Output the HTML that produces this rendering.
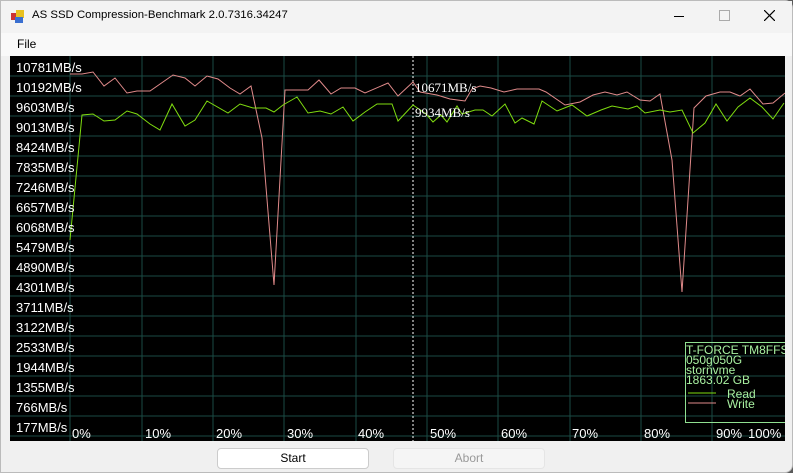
<!DOCTYPE html>
<html><head><style>
body{margin:0;width:793px;height:473px;background:#5a5a5a;font-family:"Liberation Sans",sans-serif;overflow:hidden;position:relative}
.win{position:absolute;left:0;top:0;width:791px;height:471px;background:#f0f0f0;border:1px solid #bbb;border-radius:0 8px 8px 0}
.title{position:absolute;left:0;top:0;width:791px;height:32px;background:#f3f3f3}
.menu{position:absolute;left:0;top:32px;width:791px;height:23px;background:#f9f9f9}
.btn{position:absolute;top:448px;width:150px;height:19px;border:1px solid #ccc;border-radius:4px;background:#fff;font-size:12px;text-align:center;line-height:19px}
</style></head><body>
<div class="win">
<div class="title">
<svg style="position:absolute;left:10px;top:9px" width="14" height="14"><rect x="0" y="3" width="7" height="7" fill="#c33"/><rect x="5" y="0" width="8" height="8" fill="#e8c020"/><rect x="4" y="7" width="8" height="6" fill="#3a6fd0"/></svg>
<div style="position:absolute;left:31px;top:8px;font-size:11.4px;color:#000">AS SSD Compression-Benchmark 2.0.7316.34247</div>
<div style="position:absolute;left:673px;top:15px;width:10px;height:1px;background:#000"></div>
<div style="position:absolute;left:718px;top:9px;width:9px;height:9px;border:1px solid #aaa"></div>
<svg style="position:absolute;left:763px;top:9px" width="11" height="11"><path d="M0 0L11 11M11 0L0 11" stroke="#000" stroke-width="1.2"/></svg>
</div>
<div class="menu"><span style="position:absolute;left:16px;top:4px;font-size:12px">File</span></div>
</div>
<svg style="position:absolute;left:10px;top:56px" width="775" height="385" viewBox="10 56 775 385">
<rect x="10" y="56" width="775" height="385" fill="#000"/>
<g stroke="#1a4a44" stroke-width="1">
<path d="M70 56V441M142 56V441M213 56V441M284 56V441M356 56V441M427 56V441M498 56V441M570 56V441M641 56V441M712 56V441"/>
<path d="M10 76H785M10 96H785M10 116H785M10 136H785M10 156H785M10 176H785M10 196H785M10 216H785M10 236H785M10 256H785M10 276H785M10 296H785M10 316H785M10 336H785M10 356H785M10 376H785M10 396H785M10 416H785M10 436H785"/>
</g>
<path d="M413 56V441" stroke="#fff" stroke-dasharray="2,2"/>
<polyline fill="none" stroke="#e08a8a" stroke-width="1" points="70,74 82,74 93,72 104,86 115,78 127,93 137,91 150,91 173,75 185,78 195,86 207,76 218,79 230,88 240,94 251,86 262,138 274,285 285,90 300,90 308,90 319,80 331,94 341,88 355,88 365,93 388,83 398,96 413,82 420,92 437,95 450,99 465,101 472,89 480,86 491,88 504,92 517,89 539,89 546,92 565,105 580,102 593,95 605,92 617,95 627,92 640,100 650,101 660,94 672,160 682,292 694,108 706,96 720,92 730,92 740,96 750,89 763,104 773,103 785,93"/>
<polyline fill="none" stroke="#7fdc10" stroke-width="1" points="70,240 82,115 93,114 104,121 115,120 127,111 137,114 150,124 160,130 172,104 185,126 195,120 207,101 228,113 240,104 253,108 266,108 274,112 283,105 297,97 308,113 320,111 331,114 343,107 353,121 365,112 377,104 392,104 398,121 413,105 426,114 433,122 441,115 447,122 457,106 462,114 475,110 483,110 492,116 505,104 515,123 522,118 534,124 542,101 557,111 572,105 587,116 601,110 612,106 628,109 637,106 645,113 660,110 670,112 682,110 693,133 705,123 716,104 727,121 738,107 750,98 762,107 773,119 784,103"/>
<g fill="#fff" font-family="Liberation Sans" font-size="13">
<text x="16" y="72">10781MB/s</text><text x="16" y="92">10192MB/s</text><text x="16" y="112">9603MB/s</text><text x="16" y="132">9013MB/s</text><text x="16" y="152">8424MB/s</text><text x="16" y="172">7835MB/s</text><text x="16" y="192">7246MB/s</text><text x="16" y="212">6657MB/s</text><text x="16" y="232">6068MB/s</text><text x="16" y="252">5479MB/s</text><text x="16" y="272">4890MB/s</text><text x="16" y="292">4301MB/s</text><text x="16" y="312">3711MB/s</text><text x="16" y="332">3122MB/s</text><text x="16" y="352">2533MB/s</text><text x="16" y="372">1944MB/s</text><text x="16" y="392">1355MB/s</text><text x="16" y="412">766MB/s</text><text x="16" y="432">177MB/s</text>
<text x="72" y="438">0%</text><text x="145" y="438">10%</text><text x="216" y="438">20%</text><text x="287" y="438">30%</text><text x="358" y="438">40%</text><text x="430" y="438">50%</text><text x="501" y="438">60%</text><text x="572" y="438">70%</text><text x="644" y="438">80%</text><text x="716" y="438">90%</text><text x="748" y="438">100%</text>
</g>
<g fill="#fff" font-family="Liberation Serif" font-size="13"><text x="415" y="92">10671MB/s</text><text x="415" y="117">9934MB/s</text></g>
<rect x="685.5" y="342.5" width="110" height="80" fill="none" stroke="#90e090"/>
<g fill="#a8f0a0" font-family="Liberation Sans" font-size="12">
<text x="686" y="354">T-FORCE TM8FFS</text><text x="686" y="364">050g050G</text><text x="686" y="374">stornvme</text><text x="686" y="384">1863.02 GB</text>
<text x="727" y="398">Read</text><text x="727" y="408">Write</text></g>
<path d="M688 393H716" stroke="#7fdc10"/><path d="M688 403H716" stroke="#e08a8a"/>
</svg>
<div class="btn" style="left:217px">Start</div>
<div class="btn" style="left:393px;background:#f5f5f5;border-color:#e5e5e5;color:#999">Abort</div>
</body></html>
